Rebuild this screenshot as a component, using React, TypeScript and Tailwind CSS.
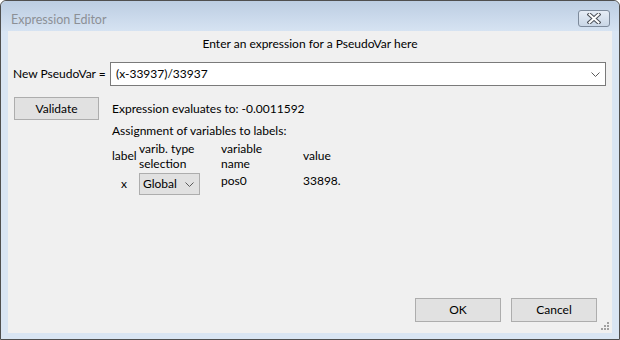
import React from "react";

function Chevron({ className = "" }: { className?: string }) {
  return (
    <svg width="9" height="5" viewBox="0 0 9 5" className={className}>
      <path d="M0.5 0.5 L4.5 4.5 L8.5 0.5" fill="none" stroke="#5a5a5a" strokeWidth="1" />
    </svg>
  );
}

function CloseGlyph() {
  return (
    <svg width="14" height="11" viewBox="0 0 14 11">
      <path d="M2.5 1.5 L11.5 9.5 M11.5 1.5 L2.5 9.5" stroke="#4a4f57" strokeWidth="4" strokeLinecap="square" fill="none" />
      <path d="M2.5 1.5 L11.5 9.5 M11.5 1.5 L2.5 9.5" stroke="#ffffff" strokeWidth="2" strokeLinecap="square" fill="none" />
    </svg>
  );
}

export default function App() {
  return (
    <div className="w-[620px] h-[340px] bg-white font-['Lato',sans-serif] text-[12px] text-black">
      <div className="relative w-[620px] h-[340px] border border-[#4f4f4f] rounded-t-[6px] bg-[#d9e5f3] flex flex-col">
        {/* Title bar */}
        <div className="h-[30px] shrink-0 rounded-t-[6px] bg-gradient-to-b from-[#bccde2] to-[#d6e3f2] flex items-start justify-between pl-[10px] pr-[9px]">
          <span className="text-[#8c9096] text-[12.5px] leading-[14px] mt-[12px] whitespace-nowrap">Expression Editor</span>
          <div className="w-[32px] h-[17px] mt-[9px] rounded-[3px] border border-[#7d8a9b] bg-gradient-to-b from-[#e6edf6] to-[#c9d6e6] flex items-center justify-center">
            <CloseGlyph />
          </div>
        </div>
        {/* Content */}
        <div className="flex-1 mx-[7px] mb-[6px] bg-[#f0f0f0] flex flex-col relative">
          <div className="text-center leading-[16px] mt-[5px] whitespace-nowrap">Enter an expression for a PseudoVar here</div>
          <div className="flex items-center mt-[10px]">
            <span className="ml-[5px] w-[97px] leading-[16px] whitespace-nowrap">New PseudoVar =</span>
            <div className="w-[496px] h-[24px] bg-white border border-[#7a7a7a] flex items-center justify-between pl-[5px] pr-[5px]">
              <span className="leading-[16px]">(x-33937)/33937</span>
              <Chevron />
            </div>
          </div>
          <div className="flex mt-[11px]">
            <div className="ml-[6px] w-[85px] h-[23px] bg-[#e1e1e1] border border-[#adadad] flex items-center justify-center leading-[16px]">Validate</div>
            <div className="ml-[13px] flex flex-col">
              <div className="leading-[16px] mt-[4px] whitespace-nowrap">Expression evaluates to: -0.0011592</div>
              <div className="leading-[16px] mt-[6px] whitespace-nowrap">Assignment of variables to labels:</div>
              <div className="flex mt-[2px]">
                <div className="w-[27px] leading-[16px] mt-[7px]">label</div>
                <div className="w-[82px] leading-[15px]">varib. type<br />selection</div>
                <div className="w-[82px] leading-[15px]">variable<br />name</div>
                <div className="leading-[16px] mt-[7px]">value</div>
              </div>
              <div className="flex mt-[2px]">
                <div className="w-[27px] pl-[9px] leading-[16px] mt-[3px]">x</div>
                <div className="w-[82px]">
                  <div className="w-[61px] h-[22px] bg-[#e1e1e1] border border-[#adadad] flex items-center justify-between pl-[3px] pr-[5px]">
                    <span className="leading-[16px]">Global</span>
                    <Chevron />
                  </div>
                </div>
                <div className="w-[82px] leading-[16px]">pos0</div>
                <div className="leading-[16px]">33898.</div>
              </div>
            </div>
          </div>
          <div className="flex-1" />
          <div className="flex justify-end gap-[10px] mr-[15px] mb-[11px]">
            <div className="w-[86px] h-[24px] bg-[#e1e1e1] border border-[#adadad] flex items-center justify-center leading-[16px]">OK</div>
            <div className="w-[86px] h-[24px] bg-[#e1e1e1] border border-[#adadad] flex items-center justify-center leading-[16px]">Cancel</div>
          </div>
          {/* size grip */}
          <div className="absolute right-[3px] bottom-[3px] w-[8px] h-[8px]">
            <div className="absolute left-[6px] top-[0px] w-[2px] h-[2px] bg-[#a0a0a0]" />
            <div className="absolute left-[3px] top-[3px] w-[2px] h-[2px] bg-[#a0a0a0]" />
            <div className="absolute left-[6px] top-[3px] w-[2px] h-[2px] bg-[#a0a0a0]" />
            <div className="absolute left-[0px] top-[6px] w-[2px] h-[2px] bg-[#a0a0a0]" />
            <div className="absolute left-[3px] top-[6px] w-[2px] h-[2px] bg-[#a0a0a0]" />
            <div className="absolute left-[6px] top-[6px] w-[2px] h-[2px] bg-[#a0a0a0]" />
          </div>
        </div>
      </div>
    </div>
  );
}
